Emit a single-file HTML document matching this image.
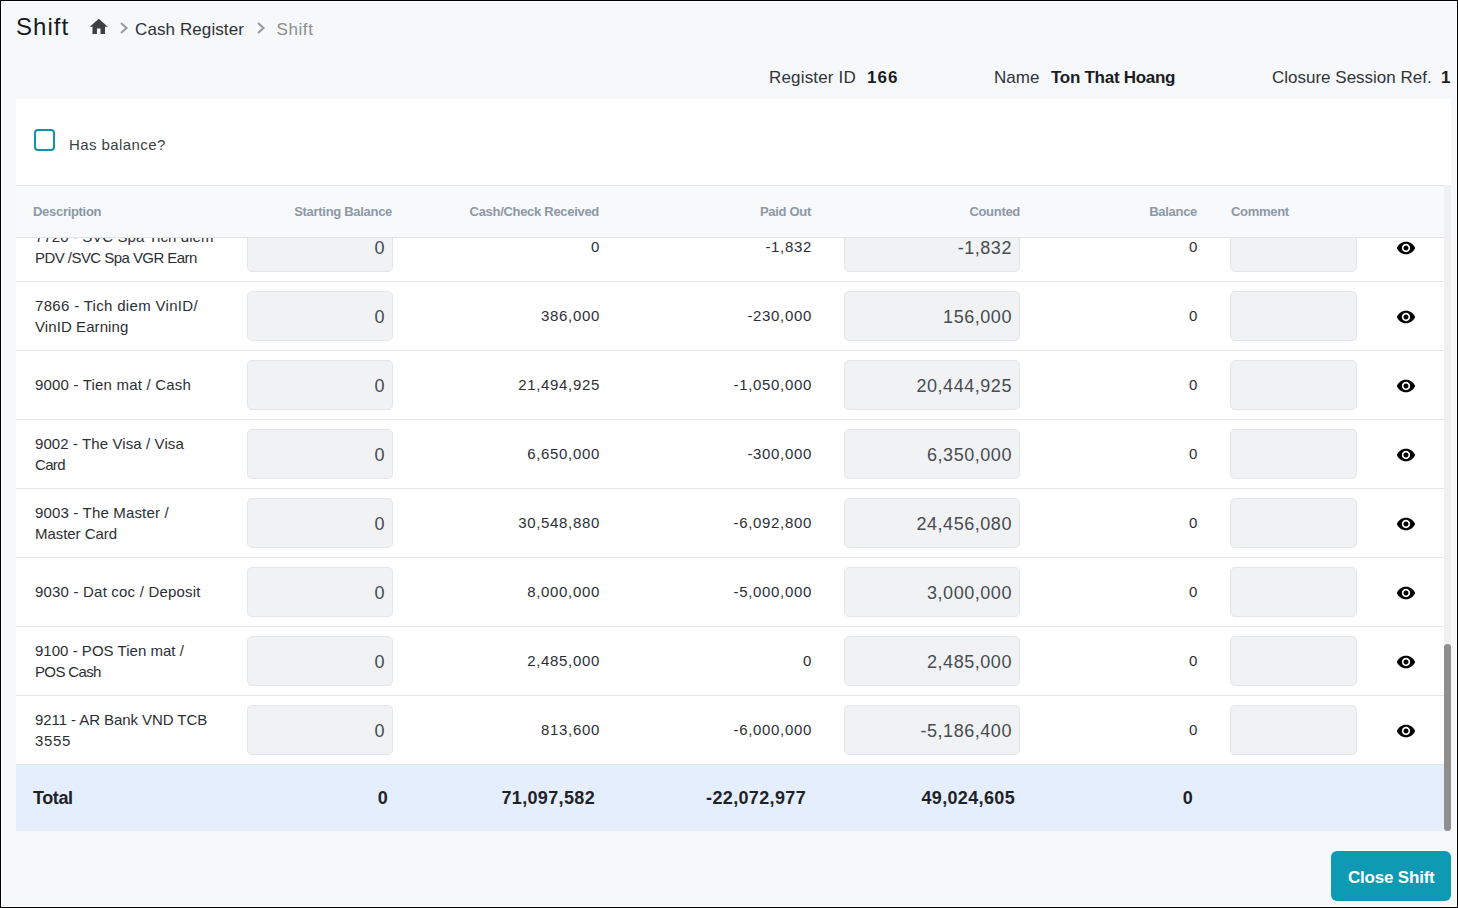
<!DOCTYPE html>
<html><head><meta charset="utf-8">
<style>
*{box-sizing:border-box;margin:0;padding:0}
html,body{width:1458px;height:908px;overflow:hidden}
body{background:#f7f8fa;font-family:"Liberation Sans",sans-serif;color:#22262b;position:relative}
.frame{position:absolute;left:0;top:0;width:1458px;height:908px;border:1px solid #000;z-index:50;pointer-events:none}
.frame:after{content:"";position:absolute;left:0;top:0;right:0;bottom:0;border:1px solid #fff}
.a{position:absolute;white-space:nowrap}
.title{left:16px;top:12px;font-size:24px;line-height:30px;color:#161a1f;letter-spacing:1.05px}
.bc{top:19.5px;font-size:17px;line-height:20px;color:#2d3136;letter-spacing:0.1px}
.card{position:absolute;left:16px;top:99px;width:1435px;height:732px;background:#fff}
.cb{position:absolute;left:34px;top:129px;width:21px;height:22px;border:2px solid #0e95ad;border-radius:4px}
.lab{left:69px;top:136.3px;font-size:15px;line-height:18px;color:#3a3f45;letter-spacing:0.42px}
.info{top:68px;font-size:17px;line-height:20px;color:#30343a}
.infob{top:68px;font-size:17px;line-height:20px;color:#1a1d22;font-weight:bold}
.scroll{position:absolute;left:16px;top:185px;width:1435px;height:646px;overflow:hidden;background:#fff}
.thead{position:absolute;left:0;top:0;width:1428px;height:53px;background:#f8f9fb;border-top:1px solid #e1e5ea;border-bottom:1px solid #e1e5ea;z-index:5}
.th{position:absolute;top:18px;font-size:13px;line-height:16px;font-weight:bold;color:#8c98a5;white-space:nowrap;letter-spacing:-0.3px}
.r{text-align:right}
.row{position:absolute;left:0;width:1428px;height:69px;border-bottom:1px solid #e3e6ea}
.desc{position:absolute;left:19px;font-size:15px;line-height:21px;color:#2b2f35;white-space:nowrap;letter-spacing:0px}
.num{position:absolute;font-size:15px;line-height:20px;color:#2b2f35;text-align:right;white-space:nowrap;letter-spacing:0.67px}
.inp{position:absolute;top:9px;height:50px;background:#f1f2f4;border:1px solid #e4e6e9;border-radius:5px;font-size:18px;line-height:22px;color:#474c52;letter-spacing:0.55px}
.inp span{position:absolute;white-space:nowrap}
.eye{position:absolute;left:1380px;top:25px;width:20px;height:20px}
.total{position:absolute;left:0;top:580px;width:1428px;height:66px;background:#e4eefd}
.tn{position:absolute;top:23px;font-size:18px;line-height:20px;font-weight:bold;color:#1f2328;white-space:nowrap;letter-spacing:0.35px}
.track{position:absolute;left:1428px;top:0;width:7px;height:646px;background:#f0f0f0}
.thumb{position:absolute;left:1428px;top:459px;width:7px;height:187px;background:#8f8f8f;border-radius:4px}
.btn{position:absolute;left:1331px;top:851px;width:120px;height:50px;background:#0f9ab4;border-radius:6px}
.btn span{position:absolute;left:17px;top:17px;color:#fff;font-weight:bold;font-size:17px;line-height:20px;letter-spacing:-0.2px;white-space:nowrap}
</style></head><body>
<div class="frame"></div>
<div class="a title">Shift</div>
<svg class="a" style="left:87.9px;top:15.8px" width="21.5" height="21.5" viewBox="0 0 24 24"><path d="M10 20v-6h4v6h5v-8h3L12 3 2 12h3v8z" fill="#3c4043"/></svg>
<svg class="a" style="left:119px;top:22px" width="10" height="12" viewBox="0 0 10 12"><path d="M2 1 L7.5 6 L2 11" fill="none" stroke="#9a9a9a" stroke-width="2.1"/></svg>
<div class="a bc" style="left:135px">Cash Register</div>
<svg class="a" style="left:256px;top:22px" width="10" height="12" viewBox="0 0 10 12"><path d="M2 1 L7.5 6 L2 11" fill="none" stroke="#9a9a9a" stroke-width="2.1"/></svg>
<div class="a bc" style="left:276.5px;color:#8a8f94;letter-spacing:0.6px">Shift</div>

<div class="a info" style="left:769px;letter-spacing:0.17px">Register ID</div>
<div class="a infob" style="left:867px;letter-spacing:1px">166</div>
<div class="a info" style="left:994px">Name</div>
<div class="a infob" style="left:1051px;letter-spacing:-0.28px">Ton That Hoang</div>
<div class="a info" style="left:1272px">Closure Session Ref.</div>
<div class="a infob" style="left:1441px">1</div>

<div class="card"></div>
<div class="cb"></div>
<div class="a lab">Has balance?</div>

<div class="scroll" id="sc">
 <div class="thead">
  <div class="th" style="left:17px">Description</div>
  <div class="th r" style="right:1052px">Starting Balance</div>
  <div class="th r" style="right:845px">Cash/Check Received</div>
  <div class="th r" style="right:633px">Paid Out</div>
  <div class="th r" style="right:424px">Counted</div>
  <div class="th r" style="right:247px">Balance</div>
  <div class="th" style="left:1215px">Comment</div>
 </div>
<div class="row" style="top:28px"><div class="desc" style="top:13.20px;letter-spacing:0.074px">7720 - SVC Spa Tich diem</div><div class="desc" style="top:34.20px;letter-spacing:-0.550px">PDV /SVC Spa VGR Earn</div><div class="inp" style="left:231px;width:146px"><span style="right:7px;top:13.96px">0</span></div><div class="num" style="right:844px;top:24.20px">0</div><div class="num" style="right:632px;top:24.20px">-1,832</div><div class="inp" style="left:828px;width:176px"><span style="right:7px;top:13.96px">-1,832</span></div><div class="num" style="right:246px;top:24.20px">0</div><div class="inp" style="left:1214px;width:127px"></div><svg class="eye" viewBox="0 0 24 24"><path d="M12 4.5C7 4.5 2.73 7.61 1 12c1.73 4.39 6 7.5 11 7.5s9.27-3.11 11-7.5c-1.73-4.39-6-7.5-11-7.5zM12 17c-2.76 0-5-2.24-5-5s2.24-5 5-5 5 2.24 5 5-2.24 5-5 5zm0-8c-1.66 0-3 1.34-3 3s1.34 3 3 3 3-1.34 3-3-1.34-3-3-3z" fill="#000"/></svg></div>
<div class="row" style="top:97px"><div class="desc" style="top:13.20px;letter-spacing:0.318px">7866 - Tich diem VinID/</div><div class="desc" style="top:34.20px;letter-spacing:0.083px">VinID Earning</div><div class="inp" style="left:231px;width:146px"><span style="right:7px;top:13.96px">0</span></div><div class="num" style="right:844px;top:24.20px">386,000</div><div class="num" style="right:632px;top:24.20px">-230,000</div><div class="inp" style="left:828px;width:176px"><span style="right:7px;top:13.96px">156,000</span></div><div class="num" style="right:246px;top:24.20px">0</div><div class="inp" style="left:1214px;width:127px"></div><svg class="eye" viewBox="0 0 24 24"><path d="M12 4.5C7 4.5 2.73 7.61 1 12c1.73 4.39 6 7.5 11 7.5s9.27-3.11 11-7.5c-1.73-4.39-6-7.5-11-7.5zM12 17c-2.76 0-5-2.24-5-5s2.24-5 5-5 5 2.24 5 5-2.24 5-5 5zm0-8c-1.66 0-3 1.34-3 3s1.34 3 3 3 3-1.34 3-3-1.34-3-3-3z" fill="#000"/></svg></div>
<div class="row" style="top:166px"><div class="desc" style="top:23.20px;letter-spacing:0.190px">9000 - Tien mat / Cash</div><div class="inp" style="left:231px;width:146px"><span style="right:7px;top:13.96px">0</span></div><div class="num" style="right:844px;top:24.20px">21,494,925</div><div class="num" style="right:632px;top:24.20px">-1,050,000</div><div class="inp" style="left:828px;width:176px"><span style="right:7px;top:13.96px">20,444,925</span></div><div class="num" style="right:246px;top:24.20px">0</div><div class="inp" style="left:1214px;width:127px"></div><svg class="eye" viewBox="0 0 24 24"><path d="M12 4.5C7 4.5 2.73 7.61 1 12c1.73 4.39 6 7.5 11 7.5s9.27-3.11 11-7.5c-1.73-4.39-6-7.5-11-7.5zM12 17c-2.76 0-5-2.24-5-5s2.24-5 5-5 5 2.24 5 5-2.24 5-5 5zm0-8c-1.66 0-3 1.34-3 3s1.34 3 3 3 3-1.34 3-3-1.34-3-3-3z" fill="#000"/></svg></div>
<div class="row" style="top:235px"><div class="desc" style="top:13.20px;letter-spacing:0.095px">9002 - The Visa / Visa</div><div class="desc" style="top:34.20px;letter-spacing:-0.667px">Card</div><div class="inp" style="left:231px;width:146px"><span style="right:7px;top:13.96px">0</span></div><div class="num" style="right:844px;top:24.20px">6,650,000</div><div class="num" style="right:632px;top:24.20px">-300,000</div><div class="inp" style="left:828px;width:176px"><span style="right:7px;top:13.96px">6,350,000</span></div><div class="num" style="right:246px;top:24.20px">0</div><div class="inp" style="left:1214px;width:127px"></div><svg class="eye" viewBox="0 0 24 24"><path d="M12 4.5C7 4.5 2.73 7.61 1 12c1.73 4.39 6 7.5 11 7.5s9.27-3.11 11-7.5c-1.73-4.39-6-7.5-11-7.5zM12 17c-2.76 0-5-2.24-5-5s2.24-5 5-5 5 2.24 5 5-2.24 5-5 5zm0-8c-1.66 0-3 1.34-3 3s1.34 3 3 3 3-1.34 3-3-1.34-3-3-3z" fill="#000"/></svg></div>
<div class="row" style="top:304px"><div class="desc" style="top:13.20px;letter-spacing:0.167px">9003 - The Master /</div><div class="desc" style="top:34.20px;letter-spacing:-0.050px">Master Card</div><div class="inp" style="left:231px;width:146px"><span style="right:7px;top:13.96px">0</span></div><div class="num" style="right:844px;top:24.20px">30,548,880</div><div class="num" style="right:632px;top:24.20px">-6,092,800</div><div class="inp" style="left:828px;width:176px"><span style="right:7px;top:13.96px">24,456,080</span></div><div class="num" style="right:246px;top:24.20px">0</div><div class="inp" style="left:1214px;width:127px"></div><svg class="eye" viewBox="0 0 24 24"><path d="M12 4.5C7 4.5 2.73 7.61 1 12c1.73 4.39 6 7.5 11 7.5s9.27-3.11 11-7.5c-1.73-4.39-6-7.5-11-7.5zM12 17c-2.76 0-5-2.24-5-5s2.24-5 5-5 5 2.24 5 5-2.24 5-5 5zm0-8c-1.66 0-3 1.34-3 3s1.34 3 3 3 3-1.34 3-3-1.34-3-3-3z" fill="#000"/></svg></div>
<div class="row" style="top:373px"><div class="desc" style="top:23.20px;letter-spacing:0.196px">9030 - Dat coc / Deposit</div><div class="inp" style="left:231px;width:146px"><span style="right:7px;top:13.96px">0</span></div><div class="num" style="right:844px;top:24.20px">8,000,000</div><div class="num" style="right:632px;top:24.20px">-5,000,000</div><div class="inp" style="left:828px;width:176px"><span style="right:7px;top:13.96px">3,000,000</span></div><div class="num" style="right:246px;top:24.20px">0</div><div class="inp" style="left:1214px;width:127px"></div><svg class="eye" viewBox="0 0 24 24"><path d="M12 4.5C7 4.5 2.73 7.61 1 12c1.73 4.39 6 7.5 11 7.5s9.27-3.11 11-7.5c-1.73-4.39-6-7.5-11-7.5zM12 17c-2.76 0-5-2.24-5-5s2.24-5 5-5 5 2.24 5 5-2.24 5-5 5zm0-8c-1.66 0-3 1.34-3 3s1.34 3 3 3 3-1.34 3-3-1.34-3-3-3z" fill="#000"/></svg></div>
<div class="row" style="top:442px"><div class="desc" style="top:13.20px;letter-spacing:0.025px">9100 - POS Tien mat /</div><div class="desc" style="top:34.20px;letter-spacing:-0.643px">POS Cash</div><div class="inp" style="left:231px;width:146px"><span style="right:7px;top:13.96px">0</span></div><div class="num" style="right:844px;top:24.20px">2,485,000</div><div class="num" style="right:632px;top:24.20px">0</div><div class="inp" style="left:828px;width:176px"><span style="right:7px;top:13.96px">2,485,000</span></div><div class="num" style="right:246px;top:24.20px">0</div><div class="inp" style="left:1214px;width:127px"></div><svg class="eye" viewBox="0 0 24 24"><path d="M12 4.5C7 4.5 2.73 7.61 1 12c1.73 4.39 6 7.5 11 7.5s9.27-3.11 11-7.5c-1.73-4.39-6-7.5-11-7.5zM12 17c-2.76 0-5-2.24-5-5s2.24-5 5-5 5 2.24 5 5-2.24 5-5 5zm0-8c-1.66 0-3 1.34-3 3s1.34 3 3 3 3-1.34 3-3-1.34-3-3-3z" fill="#000"/></svg></div>
<div class="row" style="top:511px"><div class="desc" style="top:13.20px;letter-spacing:-0.071px">9211 - AR Bank VND TCB</div><div class="desc" style="top:34.20px;letter-spacing:0.667px">3555</div><div class="inp" style="left:231px;width:146px"><span style="right:7px;top:13.96px">0</span></div><div class="num" style="right:844px;top:24.20px">813,600</div><div class="num" style="right:632px;top:24.20px">-6,000,000</div><div class="inp" style="left:828px;width:176px"><span style="right:7px;top:13.96px">-5,186,400</span></div><div class="num" style="right:246px;top:24.20px">0</div><div class="inp" style="left:1214px;width:127px"></div><svg class="eye" viewBox="0 0 24 24"><path d="M12 4.5C7 4.5 2.73 7.61 1 12c1.73 4.39 6 7.5 11 7.5s9.27-3.11 11-7.5c-1.73-4.39-6-7.5-11-7.5zM12 17c-2.76 0-5-2.24-5-5s2.24-5 5-5 5 2.24 5 5-2.24 5-5 5zm0-8c-1.66 0-3 1.34-3 3s1.34 3 3 3 3-1.34 3-3-1.34-3-3-3z" fill="#000"/></svg></div>
 <div class="total">
  <div class="tn" style="left:17px;letter-spacing:-0.4px">Total</div>
  <div class="tn r" style="right:1056px">0</div>
  <div class="tn r" style="right:849px">71,097,582</div>
  <div class="tn r" style="right:638px">-22,072,977</div>
  <div class="tn r" style="right:429px">49,024,605</div>
  <div class="tn r" style="right:251px">0</div>
 </div>
 <div class="track"></div>
 <div class="thumb"></div>
</div>

<div class="btn"><span>Close Shift</span></div>
</body></html>
